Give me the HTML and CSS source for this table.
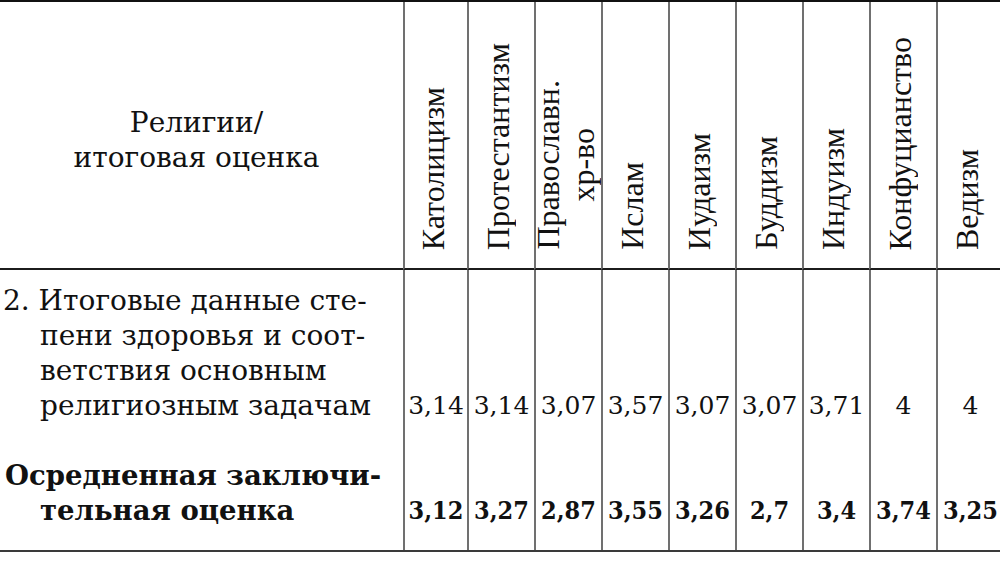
FILE: index.html
```html
<!DOCTYPE html>
<html lang="ru">
<head>
<meta charset="utf-8">
<title>Религии / итоговая оценка</title>
<link rel="stylesheet" href="styles.css">
</head>
<body>
<table class="grid">
  <colgroup>
    <col class="c-label">
    <col class="c-first">
    <col class="c-num"><col class="c-num"><col class="c-num"><col class="c-num">
    <col class="c-num"><col class="c-num"><col class="c-num"><col class="c-num">
  </colgroup>
  <thead>
    <tr>
      <th class="label-head"><div class="label-head-inner">Религии/<br>итоговая оценка</div></th>
      <th><div class="rel-box"><span class="rel-text">Католицизм</span></div></th>
      <th><div class="rel-box"><span class="rel-text">Протестантизм</span></div></th>
      <th><div class="rel-box"><span class="rel-text">Православн.<br>хр-во</span></div></th>
      <th><div class="rel-box"><span class="rel-text">Ислам</span></div></th>
      <th><div class="rel-box"><span class="rel-text">Иудаизм</span></div></th>
      <th><div class="rel-box"><span class="rel-text">Буддизм</span></div></th>
      <th><div class="rel-box"><span class="rel-text">Индуизм</span></div></th>
      <th><div class="rel-box"><span class="rel-text">Конфуцианство</span></div></th>
      <th><div class="rel-box"><span class="rel-text">Ведизм</span></div></th>
    </tr>
  </thead>
  <tbody>
    <tr class="row-data">
      <td class="label"><div class="hang">2. Итоговые данные сте-<br>пени здоровья и соот-<br>ветствия основным<br>религиозным задачам</div></td>
      <td class="num">3,14</td>
      <td class="num">3,14</td>
      <td class="num">3,07</td>
      <td class="num">3,57</td>
      <td class="num">3,07</td>
      <td class="num">3,07</td>
      <td class="num">3,71</td>
      <td class="num">4</td>
      <td class="num">4</td>
    </tr>
    <tr class="row-total">
      <td class="label"><div class="hang">Осредненная заключи-<br>тельная оценка</div></td>
      <td class="num">3,12</td>
      <td class="num">3,27</td>
      <td class="num">2,87</td>
      <td class="num">3,55</td>
      <td class="num">3,26</td>
      <td class="num">2,7</td>
      <td class="num">3,4</td>
      <td class="num">3,74</td>
      <td class="num">3,25</td>
    </tr>
  </tbody>
</table>
</body>
</html>
```

FILE: styles.css
```css
html, body {
  margin: 0;
  padding: 0;
  overflow: hidden;
  background: #ffffff;
}

body {
  font-family: "DejaVu Serif", "Liberation Serif", serif;
  color: #111111;
}

.grid {
  border-collapse: separate;
  border-spacing: 0;
  table-layout: fixed;
  width: 1003px;
  border-top: 2px solid #111111;
  border-bottom: 2px solid #3a3a3a;
}

.c-label { width: 403px; }
.c-first { width: 64px; }
.c-num { width: 67px; }

th, td {
  padding: 0;
  box-sizing: border-box;
}

th + th, td + td {
  border-left: 2px solid #707070;
}

thead th {
  height: 268px;
  border-bottom: 2px solid #1c1c1c;
  vertical-align: top;
  font-weight: normal;
}

.label-head-inner {
  padding: 103px 10px 0 0;
  text-align: center;
  font-size: 28px;
  line-height: 35px;
}

.rel-box {
  height: 266px;
  display: flex;
  align-items: flex-end;
  justify-content: center;
  padding: 0 6px 18px 0;
  box-sizing: border-box;
}

.rel-text {
  writing-mode: vertical-rl;
  transform: rotate(180deg);
  font-family: "Liberation Serif", serif;
  font-size: 32px;
  line-height: 35px;
  white-space: nowrap;
}

tbody td {
  vertical-align: bottom;
  line-height: 35px;
}

.row-data td {
  height: 170px;
  padding-bottom: 17px;
}

.row-total td {
  height: 110px;
  padding-bottom: 22px;
}

.label {
  font-size: 28px;
}

.hang {
  padding-left: 40px;
  text-indent: -37px;
  white-space: nowrap;
}

.row-total .hang {
  text-indent: -35px;
  font-weight: bold;
  font-size: 27.5px;
}

.num {
  text-align: center;
  font-size: 25px;
}

.row-total .num {
  font-family: "DejaVu Serif Condensed", "DejaVu Serif", serif;
  font-weight: bold;
}
```
